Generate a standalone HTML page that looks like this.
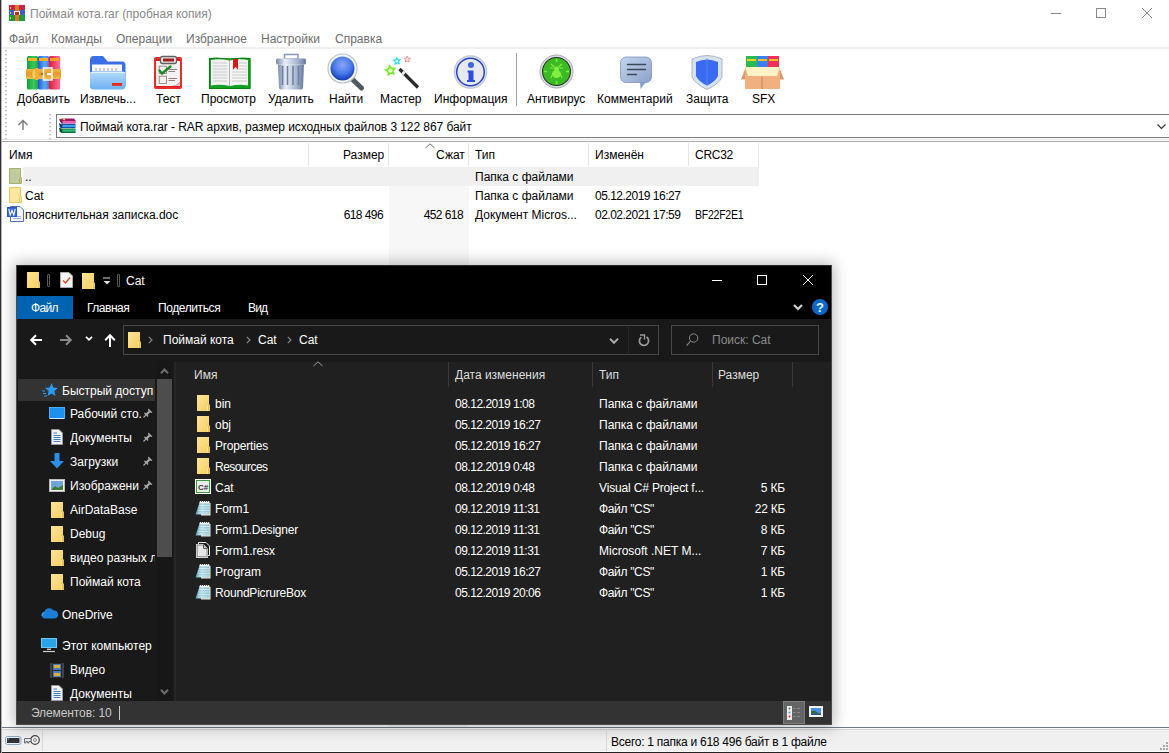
<!DOCTYPE html>
<html><head><meta charset="utf-8">
<style>
*{margin:0;padding:0;box-sizing:border-box}
html,body{width:1169px;height:753px;overflow:hidden;background:#fff;font-family:"Liberation Sans",sans-serif;font-size:12px;color:#000}
.a{position:absolute;white-space:nowrap}
.t{position:absolute;white-space:nowrap;line-height:14px}
svg{position:absolute;overflow:visible}
</style></head><body>
<!-- ============ WinRAR window ============ -->

<!-- title bar -->
<svg style="left:9px;top:5px" width="16" height="16" viewBox="0 0 16 16">
  <rect x="0" y="0" width="16" height="5" fill="#c8264a"/>
  <rect x="0" y="5" width="16" height="5" fill="#3e5fc4"/>
  <rect x="0" y="10" width="16" height="6" fill="#1f9a3a"/>
  <rect x="6" y="0" width="4" height="16" fill="#e07a22"/>
  <rect x="5" y="6" width="6" height="4" fill="#fff"/>
  <rect x="6" y="7" width="4" height="3" fill="#c03020"/>
  <rect x="1" y="2" width="1" height="2" fill="#f3d020"/><rect x="1" y="7" width="1" height="2" fill="#f3d020"/><rect x="1" y="12" width="1" height="2" fill="#f3d020"/>
</svg>
<div class="t" style="left:30px;top:7px;color:#888">Поймай кота.rar (пробная копия)</div>
<!-- caption buttons -->
<div class="a" style="left:1051px;top:13px;width:10px;height:1px;background:#888"></div>
<div class="a" style="left:1096px;top:8px;width:10px;height:10px;border:1px solid #888"></div>
<svg style="left:1142px;top:8px" width="10" height="10"><path d="M0 0L10 10M10 0L0 10" stroke="#888" stroke-width="1"/></svg>

<!-- menu -->
<div class="t" style="left:9px;top:32px;color:#6d6d6d">Файл</div>
<div class="t" style="left:51px;top:32px;color:#6d6d6d">Команды</div>
<div class="t" style="left:116px;top:32px;color:#6d6d6d">Операции</div>
<div class="t" style="left:186px;top:32px;color:#6d6d6d">Избранное</div>
<div class="t" style="left:261px;top:32px;color:#6d6d6d">Настройки</div>
<div class="t" style="left:335px;top:32px;color:#6d6d6d">Справка</div>
<div class="a" style="left:1px;top:47px;width:1168px;height:2px;background:#f0f0f0"></div>

<!-- toolbar -->
<div class="a" style="left:5px;top:50px;width:2px;height:90px;background:repeating-linear-gradient(#c4c4c4 0 1px,#e4e4e4 1px 2px,transparent 2px 4px)"></div>
<svg style="left:24px;top:52px" width="40" height="40" viewBox="0 0 40 40">
<defs>
<linearGradient id="gG" x1="0" x2="1"><stop offset="0" stop-color="#12a03a"/><stop offset="0.6" stop-color="#3cc860"/><stop offset="1" stop-color="#1fa840"/></linearGradient>
<linearGradient id="gB" x1="0" x2="1"><stop offset="0" stop-color="#2a50e0"/><stop offset="0.6" stop-color="#58aef5"/><stop offset="1" stop-color="#3a78e8"/></linearGradient>
<linearGradient id="gR" x1="0" x2="1"><stop offset="0" stop-color="#e81830"/><stop offset="0.6" stop-color="#f05070"/><stop offset="1" stop-color="#f070a8"/></linearGradient>
<linearGradient id="gO" x1="0" y1="0" x2="0" y2="1"><stop offset="0" stop-color="#f0b848"/><stop offset="0.5" stop-color="#e89828"/><stop offset="1" stop-color="#f0c050"/></linearGradient>
</defs>
<rect x="3" y="4" width="11.2" height="33.5" rx="1.5" fill="url(#gG)"/>
<rect x="14" y="4" width="11.2" height="33.5" rx="1.5" fill="url(#gB)"/>
<rect x="25" y="4" width="11.2" height="33.5" rx="1.5" fill="url(#gR)"/>
<rect x="4" y="6" width="9" height="3" fill="#f5b820"/><rect x="15" y="6" width="9" height="3" fill="#f0b020"/><rect x="26" y="6" width="9" height="3" fill="#f5a020"/>
<rect x="2" y="17" width="35" height="10" fill="url(#gO)"/>
<path d="M11 17.5A5 5 0 0 0 11 26.5Z" fill="#f5d060"/>
<rect x="11" y="16" width="3.5" height="12" fill="#f0b040"/>
<rect x="19.5" y="16" width="8.5" height="12" fill="none" stroke="#f4f4f4" stroke-width="1.6"/>
<rect x="23" y="21" width="4" height="2.2" fill="#fff"/>
<circle cx="18" cy="22" r="0.8" fill="#503010"/>
</svg>
<svg style="left:88px;top:52px" width="40" height="40" viewBox="0 0 40 40">
<defs><linearGradient id="gF" x1="0" y1="0" x2="0" y2="1"><stop offset="0" stop-color="#b4dcfc"/><stop offset="1" stop-color="#6cb0f2"/></linearGradient></defs>
<path d="M2 8Q2 4 6 4H15L19.5 9.5H34Q37.5 9.5 37.5 13V33Q37.5 37 34 37H6Q2 37 2 33Z" fill="#3a6ee8"/>
<rect x="4" y="12.5" width="30" height="7" fill="#fafafa"/>
<path d="M8 16V19M12 16V19M16 16V19M20 16V19M24 16V19M28 16V19" stroke="#b0b0b0" stroke-width="1.2"/>
<path d="M2 22Q2 19.5 5 19.5H34.5Q37.5 19.5 37.5 22V33Q37.5 37.5 33.5 37.5H6Q2 37.5 2 33Z" fill="url(#gF)"/>
<path d="M2.5 20.5H37" stroke="#e0f2ff" stroke-width="1"/>
<rect x="24" y="31" width="10" height="2.8" fill="#e82818"/>
</svg>
<svg style="left:148px;top:52px" width="40" height="40" viewBox="0 0 40 40">
<rect x="6" y="5" width="28" height="32" rx="2" fill="#e01c1c"/>
<rect x="7" y="6" width="26" height="30" rx="1.5" fill="none" stroke="#f04848" stroke-width="0.8"/>
<path d="M8 9H32V30Q28 34 24 34H8Z" fill="#f2f2f2"/>
<path d="M24 34Q30 33 32 30V34H24Z" fill="#c8c8c8"/>
<rect x="12.5" y="4.5" width="16" height="7" rx="2" fill="#e8e8e8" stroke="#606060" stroke-width="1.3"/>
<rect x="15" y="6.5" width="11" height="3" fill="#a02020"/>
<rect x="11.2" y="14.2" width="7.3" height="7.3" fill="none" stroke="#a08080" stroke-width="0.9"/>
<rect x="11.2" y="24.2" width="7.3" height="7.3" fill="none" stroke="#a08080" stroke-width="0.9"/>
<path d="M11.5 18.5L14 21.5L22.5 14.5" stroke="#1a8a2a" stroke-width="2.4" fill="none" stroke-linecap="round"/>
<path d="M20.5 17.5H29M20.5 19.5H27M20.5 26.5H29M20.5 28.5H27" stroke="#907070" stroke-width="0.9"/>
</svg>
<svg style="left:208px;top:52px" width="44" height="40" viewBox="0 0 44 40">
<path d="M1 6Q11 4.5 21.5 7Q32 4.5 42.5 6V37H1Z" fill="#14a020"/>
<path d="M1.5 6.5H42V36.5H1.5Z" fill="none" stroke="#0a7a14" stroke-width="0.8"/>
<path d="M3 8Q12 6.5 21.5 8.5V34Q12 32 3 33.5Z" fill="#f2f2f2"/>
<path d="M22 8.5Q31 6.5 40 8V33.5Q31 32 22 34Z" fill="#f6f6f6"/>
<path d="M21.5 8.5V34" stroke="#b0b0b0" stroke-width="1"/>
<path d="M5 11H19M5 14H19M5 17H19M5 20H19M5 23H19M5 26H19M5 29H19M24 14H39M24 17H39M24 20H39M24 23H39M24 26H39M24 29H39M31 11H39" stroke="#c4c4c4" stroke-width="0.9"/>
<path d="M25 7H30V17.5L27.5 15L25 17.5Z" fill="#d81818"/>
</svg>
<svg style="left:272px;top:52px" width="40" height="40" viewBox="0 0 40 40">
<defs><linearGradient id="gT" x1="0" x2="1"><stop offset="0" stop-color="#7888a8"/><stop offset="0.3" stop-color="#e8eef8"/><stop offset="0.7" stop-color="#a8b8d0"/><stop offset="1" stop-color="#6878a0"/></linearGradient></defs>
<rect x="12.5" y="2.5" width="13.5" height="4.5" fill="none" stroke="#8898b8" stroke-width="1.5"/>
<path d="M6 12.5H32L31 36Q30.5 37.5 29 37.5H9Q7.5 37.5 7 36Z" fill="url(#gT)"/>
<path d="M10.5 14V33M15.5 14V33M21 14V33M26.5 14V33" stroke="#7080a0" stroke-width="1.6"/>
<rect x="4" y="6.5" width="30" height="6" rx="1.5" fill="url(#gT)"/>
</svg>
<svg style="left:325px;top:52px" width="40" height="40" viewBox="0 0 40 40">
<defs><radialGradient id="gM" cx="0.5" cy="0.35" r="0.6"><stop offset="0" stop-color="#8aa4f8"/><stop offset="0.6" stop-color="#4a7ce8"/><stop offset="1" stop-color="#1a44c0"/></radialGradient></defs>
<path d="M27 27L36.5 36" stroke="#505860" stroke-width="5" stroke-linecap="round"/>
<circle cx="17.5" cy="16.5" r="14.5" fill="#f4f8fa" stroke="#b8c4cc" stroke-width="1.2"/>
<circle cx="17.5" cy="16.5" r="12" fill="url(#gM)"/>
</svg>
<svg style="left:382px;top:52px" width="40" height="40" viewBox="0 0 40 40">
<polygon points="7.29,12.30 9.85,15.63 14.05,15.60 11.67,19.06 13.00,23.05 8.97,21.85 5.59,24.35 5.49,20.15 2.06,17.71 6.03,16.31" fill="#78e820"/><circle cx="8.4" cy="18.6" r="2.2" fill="#e8ffd8"/>
<polygon points="14.50,4.42 16.14,6.94 19.13,7.20 17.24,9.54 17.92,12.47 15.11,11.39 12.53,12.94 12.69,9.94 10.42,7.97 13.33,7.19" fill="#28dcf8"/><circle cx="14.9" cy="9" r="1.5" fill="#e8fcff"/>
<polygon points="25.20,4.20 26.20,6.02 28.24,6.41 26.82,7.93 27.08,9.99 25.20,9.10 23.32,9.99 23.58,7.93 22.16,6.41 24.20,6.02" fill="#fde8e8" stroke="#f07878" stroke-width="0.8"/>
<path d="M17.5 17L36 35.5" stroke="#2a2a2a" stroke-width="3.2"/>
<path d="M20.5 20L22.5 22" stroke="#f0f0f0" stroke-width="3.2"/>
</svg>
<svg style="left:450px;top:52px" width="40" height="40" viewBox="0 0 40 40">
<circle cx="20.5" cy="20" r="17" fill="#dde2ea"/>
<circle cx="20.5" cy="20" r="16" fill="none" stroke="#c4cad4" stroke-width="1.2"/>
<circle cx="20.5" cy="20" r="13.8" fill="#e6eaf0" stroke="#2a44c8" stroke-width="1.5"/>
<circle cx="21" cy="13" r="3" fill="#3a66e0"/>
<path d="M17.5 18.5H23.5V28H25V30H17V28H18.5V20.5H17.5Z" fill="#2a4ee0"/>
</svg>
<svg style="left:536px;top:52px" width="40" height="40" viewBox="0 0 40 40">
<circle cx="20.5" cy="19.5" r="16.5" fill="#d8dce2" stroke="#a8acb4" stroke-width="1"/>
<circle cx="20.5" cy="19.5" r="14.5" fill="#283028"/>
<circle cx="20.5" cy="19.5" r="13.5" fill="#3cba24"/>
<path d="M20.5 7V10M20.5 29V32M8 19.5H11M30 19.5H33" stroke="#70f040" stroke-width="1.5"/>
<ellipse cx="20.5" cy="22" rx="4.5" ry="4" fill="#80f040"/>
<circle cx="20.5" cy="17" r="2.5" fill="#80f040"/>
<path d="M15 12L18.5 15M26 12L22.5 15M14 16H17.5M27 16H23.5M15 26L17 21M26 26L24 21" stroke="#80f040" stroke-width="1.1"/>
</svg>
<svg style="left:615px;top:52px" width="40" height="40" viewBox="0 0 40 40">
<defs><linearGradient id="gC" x1="0" y1="0" x2="1" y2="1"><stop offset="0" stop-color="#c4d4ec"/><stop offset="0.5" stop-color="#a8bcdc"/><stop offset="1" stop-color="#8aa0c8"/></linearGradient></defs>
<path d="M25 30L25.5 37L31 30Z" fill="#8ca4c8"/>
<rect x="5.5" y="5" width="31" height="25.5" rx="5.5" fill="url(#gC)" stroke="#8094bc" stroke-width="0.8"/>
<path d="M12.5 12.5H30.5M12.5 17.5H30.5M12.5 22.5H21.5" stroke="#3e4858" stroke-width="1.4" stroke-linecap="round"/>
</svg>
<svg style="left:686px;top:52px" width="40" height="40" viewBox="0 0 40 40">
<path d="M6 7Q21 0 36 7V25Q33 32 21 37.5Q9 32 6 25Z" fill="#d8e2ee" stroke="#98a4b8" stroke-width="0.8"/>
<path d="M10 10Q21 5 32 10V24Q29 30 21 33.5Q13 30 10 24Z" fill="#3a6af2"/>
<path d="M21 6.5V33.5" stroke="#5a88f8" stroke-width="0.8"/>
</svg>
<svg style="left:740px;top:52px" width="45" height="40" viewBox="0 0 45 40">
<rect x="6" y="4" width="11" height="11" fill="#2ab850"/><rect x="17" y="4" width="11" height="11" fill="#3a80f0"/><rect x="28" y="4" width="11" height="11" fill="#f03058"/>
<rect x="7" y="7" width="9" height="2" fill="#f8d020"/><rect x="18" y="7" width="9" height="2" fill="#f0c020"/><rect x="29" y="7" width="9" height="2" fill="#f8c020"/>
<path d="M5 17L1 27.5H8ZM40 17L44 27.5H37Z" fill="#d89a70"/>
<rect x="5" y="15" width="35" height="22" fill="#f0b080"/>
<path d="M5 15H40L37 24H8Z" fill="#fff2c4"/>
<path d="M22 24.5V37" stroke="#c87850" stroke-width="0.9"/>
</svg>
<div class="t" style="left:17px;top:92px">Добавить</div>
<div class="t" style="left:80px;top:92px">Извлечь...</div>
<div class="t" style="left:156px;top:92px">Тест</div>
<div class="t" style="left:201px;top:92px">Просмотр</div>
<div class="t" style="left:268px;top:92px">Удалить</div>
<div class="t" style="left:329px;top:92px">Найти</div>
<div class="t" style="left:380px;top:92px">Мастер</div>
<div class="t" style="left:434px;top:92px">Информация</div>
<div class="a" style="left:516px;top:53px;width:1px;height:53px;background:#a0a0a0"></div>
<div class="t" style="left:527px;top:92px">Антивирус</div>
<div class="t" style="left:597px;top:92px">Комментарий</div>
<div class="t" style="left:686px;top:92px">Защита</div>
<div class="t" style="left:752px;top:92px">SFX</div>

<!-- address row -->
<svg style="left:17px;top:119px" width="12" height="12" viewBox="0 0 12 12"><path d="M6 11V1.5M1.5 6L6 1.5L10.5 6" stroke="#7a7a7a" stroke-width="1.4" fill="none"/></svg>
<div class="a" style="left:49px;top:114px;width:2px;height:26px;background:repeating-linear-gradient(#c4c4c4 0 1px,#e4e4e4 1px 2px,transparent 2px 4px)"></div>
<div class="a" style="left:56px;top:114px;width:1113px;height:24px;border:1px solid #7a7a7a;border-right:none;background:#fff"></div>
<svg style="left:59px;top:118px" width="17" height="16" viewBox="0 0 17 16"><path d="M0.5 1.5L3 0.5H15L16.5 2.5V5.5H3Z" fill="#a01868"/><path d="M3.5 3H16V5H3.5Z" fill="#f060b0"/><path d="M4 0.8L6 2" stroke="#e8e040" stroke-width="1.2"/><path d="M0.5 5.5L3 6H16.5V10H3L0.5 9.5Z" fill="#1850a8"/><path d="M3.5 7H16V9H3.5Z" fill="#40a0f0"/><path d="M0.5 10L3 10.5H16.5V15H3L0.5 14Z" fill="#107040"/><path d="M3.5 11.5H16V13.5H3.5Z" fill="#30c080"/><path d="M0.5 1.5L3 5.5M0.5 5.5L3 10M0.5 10L3 14.5" stroke="#222" stroke-width="1"/></svg>
<div class="t" style="left:80px;top:120px;letter-spacing:-0.071px">Поймай кота.rar - RAR архив, размер исходных файлов 3 122 867 байт</div>
<svg style="left:1157px;top:124px" width="9" height="6"><path d="M0.5 0.5L4.5 4.5L8.5 0.5" stroke="#333" stroke-width="1.2" fill="none"/></svg>
<div class="a" style="left:1px;top:139px;width:1168px;height:1px;background:#e6e6e6"></div><div class="a" style="left:1px;top:141px;width:1168px;height:1px;background:#a4a8ac"></div>

<!-- list header -->
<div class="t" style="left:9px;top:148px">Имя</div>
<div class="a" style="left:308px;top:143px;width:1px;height:23px;background:#e5e5e5"></div>
<div class="t" style="left:343px;top:148px">Размер</div>
<div class="a" style="left:388px;top:143px;width:1px;height:23px;background:#e5e5e5"></div>
<svg style="left:425px;top:143px" width="10" height="6"><path d="M0.5 5L5 0.8L9.5 5" stroke="#6a6a6a" stroke-width="1" fill="none"/></svg>
<div class="t" style="left:436px;top:148px">Сжат</div>
<div class="a" style="left:468px;top:143px;width:1px;height:23px;background:#e5e5e5"></div>
<div class="t" style="left:475px;top:148px">Тип</div>
<div class="a" style="left:588px;top:143px;width:1px;height:23px;background:#e5e5e5"></div>
<div class="t" style="left:595px;top:148px">Изменён</div>
<div class="a" style="left:688px;top:143px;width:1px;height:23px;background:#e5e5e5"></div>
<div class="t" style="left:695px;top:148px;letter-spacing:-0.268px">CRC32</div>
<div class="a" style="left:758px;top:143px;width:1px;height:23px;background:#e5e5e5"></div>

<!-- sorted column bg -->
<div class="a" style="left:389px;top:185px;width:80px;height:568px;background:#f7f7f7"></div>
<!-- rows -->
<div class="a" style="left:23px;top:167px;width:736px;height:19px;background:#f0f0f0"></div>
<svg style="left:9px;top:168px" width="13" height="16" viewBox="0 0 13 16"><path d="M0.5 0.5H11.5V9.5H12.5V15.5H0.5Z" fill="#c0cc9c" stroke="#a8b070"/><path d="M10.5 10V15.5" stroke="#a8b070"/></svg>
<div class="t" style="left:25px;top:170px">..</div>
<div class="t" style="left:475px;top:170px">Папка с файлами</div>

<svg style="left:9px;top:187px" width="13" height="16" viewBox="0 0 13 16"><path d="M0.5 0.5H11.5V9.5H12.5V15.5H0.5Z" fill="#fce6a0" stroke="#e8c860"/><path d="M10.5 10V15.5" stroke="#e8c860"/></svg>
<div class="t" style="left:25px;top:189px">Cat</div>
<div class="t" style="left:475px;top:189px">Папка с файлами</div>
<div class="t" style="left:595px;top:189px;letter-spacing:-0.503px">05.12.2019 16:27</div>

<svg style="left:7px;top:206px" width="17" height="17" viewBox="0 0 17 17"><path d="M3.5 0.5H13L16.5 4V15.5H3.5Z" fill="#f4f8fc" stroke="#5070b0"/><path d="M6 12.5H14M6 10.5H14" stroke="#9ab0d8"/><rect x="0" y="1" width="10" height="10" fill="#2858b8"/><rect x="1" y="2" width="8" height="8" fill="#3a6cd0"/><path d="M1.8 3L3.2 9L5 4.5L6.8 9L8.2 3" stroke="#fff" stroke-width="1.1" fill="none"/></svg>
<div class="t" style="left:25px;top:208px">пояснительная записка.doc</div>
<div class="t" style="left:309px;top:208px;width:74px;text-align:right;letter-spacing:-0.574px">618 496</div>
<div class="t" style="left:389px;top:208px;width:74px;text-align:right;letter-spacing:-0.574px">452 618</div>
<div class="t" style="left:475px;top:208px">Документ Micros...</div>
<div class="t" style="left:595px;top:208px;letter-spacing:-0.503px">02.02.2021 17:59</div>
<div class="t" style="left:695px;top:208px;letter-spacing:-0.3px;transform:scaleX(0.88);transform-origin:0 0">BF22F2E1</div>

<!-- status bar -->
<div class="a" style="left:1px;top:727px;width:1168px;height:1px;background:#707888"></div>
<div class="a" style="left:1px;top:728px;width:1168px;height:1px;background:#fafafa"></div>
<div class="a" style="left:1px;top:729px;width:1168px;height:1px;background:#d9d9d9"></div><div class="a" style="left:1px;top:730px;width:1168px;height:21px;background:#f0f0f0"></div><div class="a" style="left:1px;top:751px;width:1168px;height:1px;background:#fbfbfb"></div><div class="a" style="left:1166px;top:742px;width:2px;height:2px;background:#a8a8a8;box-shadow:-3px 3px #a8a8a8,0 3px #a8a8a8,-6px 6px #a8a8a8,-3px 6px #a8a8a8,0 6px #a8a8a8"></div><svg style="left:5px;top:736px" width="17" height="9" viewBox="0 0 17 9"><rect x="0.5" y="0.5" width="15.5" height="8" rx="2" fill="#e8f0f8" stroke="#8aa8c0"/><rect x="2" y="2" width="12.5" height="5" fill="#303438"/><circle cx="3.2" cy="3" r="0.6" fill="#eee"/></svg><svg style="left:24px;top:735px" width="17" height="11" viewBox="0 0 17 11"><circle cx="11" cy="5" r="4.3" fill="#f4f4f4" stroke="#404448" stroke-width="1.2"/><circle cx="11" cy="5" r="1.5" fill="none" stroke="#888" stroke-width="1"/><path d="M0.5 3.5H7V6.5H5V8H3.5V6.5H2V8H0.5Z" fill="#e8e8e8" stroke="#505458" stroke-width="0.8"/></svg>
<div class="a" style="left:42px;top:731px;width:1px;height:20px;background:#d9d9d9"></div>
<div class="a" style="left:606px;top:731px;width:1px;height:20px;background:#d9d9d9"></div>
<div class="t" style="left:611px;top:735px;letter-spacing:-0.255px">Всего: 1 папка и 618 496 байт в 1 файле</div>
<div class="a" style="left:0;top:752px;width:1169px;height:1px;background:#222"></div>
<div class="a" style="left:0;top:0;width:1px;height:753px;background:#2e2e34"></div><div class="a" style="left:1px;top:0;width:1px;height:753px;background:#b4b4bc"></div>
<div class="a" style="left:16px;top:265px;width:816px;height:460px;box-shadow:0 0 14px 2px rgba(0,0,0,0.28)"></div>
<div class="a" style="left:16px;top:265px;width:816px;height:460px;background:#000;overflow:hidden">
<svg style="left:11px;top:7px" width="13" height="16" viewBox="0 0 13 16"><defs><linearGradient id="fg" x1="0" y1="0" x2="1" y2="1"><stop offset="0" stop-color="#fde49a"/><stop offset="1" stop-color="#f6cf60"/></linearGradient></defs><rect x="0" y="0" width="12" height="16" fill="url(#fg)"/><path d="M10 9.5H13V16H10Z" fill="#eac058"/><path d="M10.5 10V16" stroke="#fbe3a0" stroke-width="1"/></svg>
<div class="a" style="left:31px;top:9px;width:3px;height:13px;border:1px solid #5a5a5a;border-radius:1px"></div>
<svg style="left:44px;top:7px" width="13" height="16" viewBox="0 0 13 16"><path d="M0.5 0.5H9L12.5 4V15.5H0.5Z" fill="#f4f4f4" stroke="#aaa"/><path d="M3 8.5L5.5 11L10 5.5" stroke="#e0502a" stroke-width="1.5" fill="none"/></svg>
<svg style="left:66px;top:8px" width="13" height="16" viewBox="0 0 13 16"><defs><linearGradient id="fg" x1="0" y1="0" x2="1" y2="1"><stop offset="0" stop-color="#fde49a"/><stop offset="1" stop-color="#f6cf60"/></linearGradient></defs><rect x="0" y="0" width="12" height="16" fill="url(#fg)"/><path d="M10 9.5H13V16H10Z" fill="#eac058"/><path d="M10.5 10V16" stroke="#fbe3a0" stroke-width="1"/></svg>
<svg style="left:87px;top:12px" width="8" height="8"><path d="M0 1H7" stroke="#ddd"/><path d="M0.5 4H7.5L4 7.5Z" fill="#ddd"/></svg>
<div class="a" style="left:101px;top:9px;width:3px;height:13px;border:1px solid #5a5a5a;border-radius:1px"></div>
<div class="t" style="left:110px;top:9px;color:#fff">Cat</div>
<div class="a" style="left:696px;top:15px;width:10px;height:1px;background:#fff"></div>
<div class="a" style="left:741px;top:10px;width:10px;height:10px;border:1px solid #fff"></div>
<svg style="left:787px;top:10px" width="10" height="10"><path d="M0 0L10 10M10 0L0 10" stroke="#fff" stroke-width="1"/></svg>
<div class="a" style="left:0;top:31px;width:57px;height:23px;background:#0063b1"></div>
<div class="t" style="left:15px;top:36px;color:#fff;letter-spacing:-0.65px">Файл</div>
<div class="t" style="left:71px;top:36px;color:#fff;letter-spacing:-0.5px">Главная</div>
<div class="t" style="left:142px;top:36px;color:#fff;letter-spacing:-0.4px">Поделиться</div>
<div class="t" style="left:232px;top:36px;color:#fff;letter-spacing:-0.8px">Вид</div>
<svg style="left:777px;top:39px" width="10" height="7"><path d="M1 1L5 5L9 1" stroke="#d0d0d0" stroke-width="2.2" fill="none"/></svg>
<div class="a" style="left:796px;top:34px;width:16px;height:16px;border-radius:50%;background:#0b68c4"></div>
<div class="t" style="left:800px;top:36px;color:#f0f4ff;font-weight:bold;font-size:13px">?</div>
<div class="a" style="left:0;top:54px;width:816px;height:42px;background:#191919"></div>
<svg style="left:14px;top:69px" width="12" height="12" viewBox="0 0 12 12"><path d="M12 6H1.5M6 1.2L1.2 6L6 10.8" stroke="#fff" stroke-width="2" fill="none"/></svg>
<svg style="left:44px;top:69px" width="12" height="12" viewBox="0 0 12 12"><path d="M0 6H10.5M6 1.2L10.8 6L6 10.8" stroke="#8a8a8a" stroke-width="2" fill="none"/></svg>
<svg style="left:69px;top:71px" width="8" height="5" viewBox="0 0 8 5"><path d="M1 0.8L4 3.8L7 0.8" stroke="#fff" stroke-width="1.8" fill="none"/></svg>
<svg style="left:88px;top:69px" width="12" height="13" viewBox="0 0 12 13"><path d="M6 13V1.5M1.2 6.2L6 1.2L10.8 6.2" stroke="#fff" stroke-width="2" fill="none"/></svg>
<div class="a" style="left:107px;top:60px;width:536px;height:30px;border:1px solid #474747"></div>
<div class="a" style="left:612px;top:61px;width:1px;height:28px;background:#262626"></div>
<svg style="left:112px;top:67px" width="13" height="16" viewBox="0 0 13 16"><defs><linearGradient id="fg" x1="0" y1="0" x2="1" y2="1"><stop offset="0" stop-color="#fde49a"/><stop offset="1" stop-color="#f6cf60"/></linearGradient></defs><rect x="0" y="0" width="12" height="16" fill="url(#fg)"/><path d="M10 9.5H13V16H10Z" fill="#eac058"/><path d="M10.5 10V16" stroke="#fbe3a0" stroke-width="1"/></svg>
<svg style="left:132px;top:71px" width="5" height="8"><path d="M0.8 0.8L4 4L0.8 7.2" stroke="#888" stroke-width="1.2" fill="none"/></svg>
<div class="t" style="left:147px;top:68px;color:#fff">Поймай кота</div>
<svg style="left:230px;top:71px" width="5" height="8"><path d="M0.8 0.8L4 4L0.8 7.2" stroke="#888" stroke-width="1.2" fill="none"/></svg>
<div class="t" style="left:242px;top:68px;color:#fff">Cat</div>
<svg style="left:271px;top:71px" width="5" height="8"><path d="M0.8 0.8L4 4L0.8 7.2" stroke="#888" stroke-width="1.2" fill="none"/></svg>
<div class="t" style="left:283px;top:68px;color:#fff">Cat</div>
<svg style="left:593px;top:73px" width="10" height="6"><path d="M1 0.8L5 4.8L9 0.8" stroke="#a8a8a8" stroke-width="2" fill="none"/></svg>
<svg style="left:622px;top:69px" width="12" height="13" viewBox="0 0 12 13"><path d="M3.2 3.2A4.6 4.6 0 1 0 8.5 3" stroke="#9a9a9a" stroke-width="1.7" fill="none"/><path d="M2 1H6.5V5.5" stroke="#9a9a9a" stroke-width="1.4" fill="none"/></svg>
<div class="a" style="left:655px;top:60px;width:148px;height:30px;border:1px solid #474747"></div>
<svg style="left:670px;top:68px" width="13" height="14" viewBox="0 0 13 14"><circle cx="7.6" cy="5" r="4.2" stroke="#8a8a8a" stroke-width="1" fill="none"/><path d="M4.6 8L0.6 12.6" stroke="#8a8a8a" stroke-width="1.1"/></svg>
<div class="t" style="left:696px;top:68px;color:#8c8c8c">Поиск: Cat</div>
<div class="a" style="left:0;top:96px;width:159px;height:340px;background:#191919"></div>
<div class="a" style="left:141px;top:96px;width:15px;height:340px;background:#171717"></div>
<svg style="left:144px;top:103px" width="9" height="6"><path d="M1 5.2L4.5 1.5L8 5.2" stroke="#6e6e6e" stroke-width="2" fill="none"/></svg>
<div class="a" style="left:141px;top:114px;width:15px;height:178px;background:#4d4d4d"></div>
<svg style="left:144px;top:424px" width="9" height="6"><path d="M1 0.8L4.5 4.5L8 0.8" stroke="#6e6e6e" stroke-width="2" fill="none"/></svg>
<div class="a" style="left:2px;top:114px;width:137px;height:22px;background:#333"></div>
<svg style="left:26px;top:117px" width="16" height="16" viewBox="0 0 16 16"><path d="M9.5 1L11.3 5.6L16 6L12.4 9.1L13.5 14L9.5 11.4L5.5 14L6.6 9.1L3 6L7.7 5.6Z" fill="#2b9af3"/><path d="M0 9H3M1 11.5H4M2 14H5" stroke="#2b9af3" stroke-width="1"/></svg>
<div class="t" style="left:46px;top:119px;color:#fff;width:93px;overflow:hidden">Быстрый доступ</div>
<svg style="left:33px;top:142px" width="16" height="13" viewBox="0 0 16 13"><rect x="0" y="0" width="16" height="12" fill="#1e90ef"/><rect x="0.5" y="0.5" width="15" height="11" fill="none" stroke="#43b0ff"/><path d="M1 11.5H15" stroke="#cfe8ff" stroke-width="1"/></svg>
<div class="t" style="left:54px;top:142px;color:#fff;width:85px;overflow:hidden">Рабочий сто.</div>
<svg style="left:127px;top:143px" width="10" height="10" viewBox="0 0 10 10"><path d="M5.5 0.5L9.5 4.5L8.5 5L7 4.5L5 6.5L5.3 8.3L4.6 9L1 5.4L1.7 4.7L3.5 5L5.5 3L5 1.5Z" fill="#a8a8a8"/><path d="M2.8 7.2L0.5 9.5" stroke="#a8a8a8" stroke-width="1.2"/></svg>
<svg style="left:35px;top:164px" width="12" height="16" viewBox="0 0 12 16"><path d="M0.5 0.5H8L11.5 4V15.5H0.5Z" fill="#f2f2f2" stroke="#9a9a9a"/><path d="M2.5 4H6M2.5 6.5H9.5M2.5 8.5H9.5M2.5 10.5H9.5M2.5 12.5H9.5" stroke="#3c7fd0" stroke-width="1"/></svg>
<div class="t" style="left:54px;top:166px;color:#fff;width:85px;overflow:hidden">Документы</div>
<svg style="left:127px;top:167px" width="10" height="10" viewBox="0 0 10 10"><path d="M5.5 0.5L9.5 4.5L8.5 5L7 4.5L5 6.5L5.3 8.3L4.6 9L1 5.4L1.7 4.7L3.5 5L5.5 3L5 1.5Z" fill="#a8a8a8"/><path d="M2.8 7.2L0.5 9.5" stroke="#a8a8a8" stroke-width="1.2"/></svg>
<svg style="left:33px;top:188px" width="16" height="16" viewBox="0 0 16 16"><path d="M5.5 0H10.5V8H15L8 15.5L1 8H5.5Z" fill="#2d8ee8"/></svg>
<div class="t" style="left:54px;top:190px;color:#fff;width:85px;overflow:hidden">Загрузки</div>
<svg style="left:127px;top:191px" width="10" height="10" viewBox="0 0 10 10"><path d="M5.5 0.5L9.5 4.5L8.5 5L7 4.5L5 6.5L5.3 8.3L4.6 9L1 5.4L1.7 4.7L3.5 5L5.5 3L5 1.5Z" fill="#a8a8a8"/><path d="M2.8 7.2L0.5 9.5" stroke="#a8a8a8" stroke-width="1.2"/></svg>
<svg style="left:33px;top:214px" width="16" height="13" viewBox="0 0 16 13"><rect x="0.5" y="0.5" width="15" height="12" fill="#f0f0f0" stroke="#bbb"/><rect x="2" y="2" width="12" height="9" fill="#6fa8d8"/><path d="M2 11L6 7L9 9L14 6V11Z" fill="#3d7a3a"/></svg>
<div class="t" style="left:54px;top:214px;color:#fff;width:85px;overflow:hidden">Изображени</div>
<svg style="left:127px;top:215px" width="10" height="10" viewBox="0 0 10 10"><path d="M5.5 0.5L9.5 4.5L8.5 5L7 4.5L5 6.5L5.3 8.3L4.6 9L1 5.4L1.7 4.7L3.5 5L5.5 3L5 1.5Z" fill="#a8a8a8"/><path d="M2.8 7.2L0.5 9.5" stroke="#a8a8a8" stroke-width="1.2"/></svg>
<svg style="left:35px;top:237px" width="13" height="16" viewBox="0 0 13 16"><defs><linearGradient id="fg" x1="0" y1="0" x2="1" y2="1"><stop offset="0" stop-color="#fde49a"/><stop offset="1" stop-color="#f6cf60"/></linearGradient></defs><rect x="0" y="0" width="12" height="16" fill="url(#fg)"/><path d="M10 9.5H13V16H10Z" fill="#eac058"/><path d="M10.5 10V16" stroke="#fbe3a0" stroke-width="1"/></svg>
<div class="t" style="left:54px;top:238px;color:#fff;width:85px;overflow:hidden">AirDataBase</div>
<svg style="left:35px;top:261px" width="13" height="16" viewBox="0 0 13 16"><defs><linearGradient id="fg" x1="0" y1="0" x2="1" y2="1"><stop offset="0" stop-color="#fde49a"/><stop offset="1" stop-color="#f6cf60"/></linearGradient></defs><rect x="0" y="0" width="12" height="16" fill="url(#fg)"/><path d="M10 9.5H13V16H10Z" fill="#eac058"/><path d="M10.5 10V16" stroke="#fbe3a0" stroke-width="1"/></svg>
<div class="t" style="left:54px;top:262px;color:#fff;width:85px;overflow:hidden">Debug</div>
<svg style="left:35px;top:285px" width="13" height="16" viewBox="0 0 13 16"><defs><linearGradient id="fg" x1="0" y1="0" x2="1" y2="1"><stop offset="0" stop-color="#fde49a"/><stop offset="1" stop-color="#f6cf60"/></linearGradient></defs><rect x="0" y="0" width="12" height="16" fill="url(#fg)"/><path d="M10 9.5H13V16H10Z" fill="#eac058"/><path d="M10.5 10V16" stroke="#fbe3a0" stroke-width="1"/></svg>
<div class="t" style="left:54px;top:286px;color:#fff;width:85px;overflow:hidden">видео разных л</div>
<svg style="left:35px;top:309px" width="13" height="16" viewBox="0 0 13 16"><defs><linearGradient id="fg" x1="0" y1="0" x2="1" y2="1"><stop offset="0" stop-color="#fde49a"/><stop offset="1" stop-color="#f6cf60"/></linearGradient></defs><rect x="0" y="0" width="12" height="16" fill="url(#fg)"/><path d="M10 9.5H13V16H10Z" fill="#eac058"/><path d="M10.5 10V16" stroke="#fbe3a0" stroke-width="1"/></svg>
<div class="t" style="left:54px;top:310px;color:#fff;width:85px;overflow:hidden">Поймай кота</div>
<svg style="left:25px;top:342px" width="17" height="12" viewBox="0 0 17 12"><path d="M4 11.5A3.5 3.5 0 0 1 3.5 4.6A5 5 0 0 1 12.5 3.5A4 4 0 0 1 13.5 11.5Z" fill="#1b7fd8"/><path d="M1 9A3 3 0 0 1 3.5 5.5" stroke="#49a6f5" stroke-width="1" fill="none"/></svg>
<div class="t" style="left:46px;top:343px;color:#fff">OneDrive</div>
<svg style="left:25px;top:372px" width="16" height="16" viewBox="0 0 16 16"><rect x="0" y="1" width="16" height="10" fill="#29a4e8"/><rect x="0.5" y="1.5" width="15" height="9" fill="none" stroke="#6cc8f7"/><path d="M6 11.5H10V13H6Z" fill="#bbb"/><path d="M2 14.5H14" stroke="#ccc" stroke-width="1.2"/></svg>
<div class="t" style="left:46px;top:374px;color:#fff">Этот компьютер</div>
<svg style="left:34px;top:398px" width="14" height="15" viewBox="0 0 14 15"><rect x="0" y="0" width="14" height="15" fill="#2a2a2a"/><rect x="3" y="1" width="8" height="6" fill="#4a78c8"/><rect x="3" y="8" width="8" height="6" fill="#4a78c8"/><rect x="4" y="2" width="6" height="3" fill="#d8b030"/><rect x="4" y="10" width="6" height="3" fill="#d8b030"/><path d="M1 0.5V15M13 0.5V15" stroke="#8a8a8a" stroke-dasharray="1 1"/></svg>
<div class="t" style="left:54px;top:398px;color:#fff">Видео</div>
<svg style="left:35px;top:420px" width="12" height="16" viewBox="0 0 12 16"><path d="M0.5 0.5H8L11.5 4V15.5H0.5Z" fill="#f2f2f2" stroke="#9a9a9a"/><path d="M2.5 4H6M2.5 6.5H9.5M2.5 8.5H9.5M2.5 10.5H9.5M2.5 12.5H9.5" stroke="#3c7fd0" stroke-width="1"/></svg>
<div class="t" style="left:54px;top:422px;color:#fff">Документы</div>
<div class="a" style="left:159px;top:96px;width:657px;height:340px;background:#202020"></div>
<div class="a" style="left:159px;top:96px;width:657px;height:1px;background:#191919"></div>
<div class="a" style="left:158px;top:97px;width:2px;height:339px;background:#262626"></div>
<div class="t" style="left:178px;top:103px;color:#dedede">Имя</div>
<svg style="left:297px;top:96px" width="10" height="6"><path d="M0.5 5L5 0.8L9.5 5" stroke="#a0a0a0" stroke-width="1" fill="none"/></svg>
<div class="a" style="left:432px;top:97px;width:1px;height:25px;background:#3a3a3a"></div>
<div class="a" style="left:576px;top:97px;width:1px;height:25px;background:#3a3a3a"></div>
<div class="a" style="left:696px;top:97px;width:1px;height:25px;background:#3a3a3a"></div>
<div class="a" style="left:776px;top:97px;width:1px;height:25px;background:#3a3a3a"></div>
<div class="t" style="left:439px;top:103px;color:#dedede">Дата изменения</div>
<div class="t" style="left:583px;top:103px;color:#dedede">Тип</div>
<div class="t" style="left:702px;top:103px;color:#dedede">Размер</div>
<svg style="left:181px;top:130px" width="13" height="16" viewBox="0 0 13 16"><defs><linearGradient id="fg" x1="0" y1="0" x2="1" y2="1"><stop offset="0" stop-color="#fde49a"/><stop offset="1" stop-color="#f6cf60"/></linearGradient></defs><rect x="0" y="0" width="12" height="16" fill="url(#fg)"/><path d="M10 9.5H13V16H10Z" fill="#eac058"/><path d="M10.5 10V16" stroke="#fbe3a0" stroke-width="1"/></svg>
<div class="t" style="left:199px;top:132px;color:#fff">bin</div>
<div class="t" style="left:439px;top:132px;color:#fff;letter-spacing:-0.491px">08.12.2019 1:08</div>
<div class="t" style="left:583px;top:132px;color:#fff">Папка с файлами</div>
<svg style="left:181px;top:151px" width="13" height="16" viewBox="0 0 13 16"><defs><linearGradient id="fg" x1="0" y1="0" x2="1" y2="1"><stop offset="0" stop-color="#fde49a"/><stop offset="1" stop-color="#f6cf60"/></linearGradient></defs><rect x="0" y="0" width="12" height="16" fill="url(#fg)"/><path d="M10 9.5H13V16H10Z" fill="#eac058"/><path d="M10.5 10V16" stroke="#fbe3a0" stroke-width="1"/></svg>
<div class="t" style="left:199px;top:153px;color:#fff">obj</div>
<div class="t" style="left:439px;top:153px;color:#fff;letter-spacing:-0.503px">05.12.2019 16:27</div>
<div class="t" style="left:583px;top:153px;color:#fff">Папка с файлами</div>
<svg style="left:181px;top:172px" width="13" height="16" viewBox="0 0 13 16"><defs><linearGradient id="fg" x1="0" y1="0" x2="1" y2="1"><stop offset="0" stop-color="#fde49a"/><stop offset="1" stop-color="#f6cf60"/></linearGradient></defs><rect x="0" y="0" width="12" height="16" fill="url(#fg)"/><path d="M10 9.5H13V16H10Z" fill="#eac058"/><path d="M10.5 10V16" stroke="#fbe3a0" stroke-width="1"/></svg>
<div class="t" style="left:199px;top:174px;color:#fff;letter-spacing:-0.169px">Properties</div>
<div class="t" style="left:439px;top:174px;color:#fff;letter-spacing:-0.503px">05.12.2019 16:27</div>
<div class="t" style="left:583px;top:174px;color:#fff">Папка с файлами</div>
<svg style="left:181px;top:193px" width="13" height="16" viewBox="0 0 13 16"><defs><linearGradient id="fg" x1="0" y1="0" x2="1" y2="1"><stop offset="0" stop-color="#fde49a"/><stop offset="1" stop-color="#f6cf60"/></linearGradient></defs><rect x="0" y="0" width="12" height="16" fill="url(#fg)"/><path d="M10 9.5H13V16H10Z" fill="#eac058"/><path d="M10.5 10V16" stroke="#fbe3a0" stroke-width="1"/></svg>
<div class="t" style="left:199px;top:195px;color:#fff;letter-spacing:-0.540px">Resources</div>
<div class="t" style="left:439px;top:195px;color:#fff;letter-spacing:-0.491px">08.12.2019 0:48</div>
<div class="t" style="left:583px;top:195px;color:#fff">Папка с файлами</div>
<svg style="left:179px;top:214px" width="16" height="15" viewBox="0 0 16 15"><rect x="0" y="0" width="16" height="15" fill="#f8f8f8"/><rect x="1.5" y="1.5" width="13" height="12" fill="#ececec" stroke="#3a9a3a" stroke-width="1"/><text x="3" y="10.5" font-size="8" fill="#333" font-family="Liberation Sans" font-weight="bold">C#</text></svg>
<div class="t" style="left:199px;top:216px;color:#fff">Cat</div>
<div class="t" style="left:439px;top:216px;color:#fff;letter-spacing:-0.491px">08.12.2019 0:48</div>
<div class="t" style="left:583px;top:216px;color:#fff;letter-spacing:-0.157px">Visual C# Project f...</div>
<div class="t" style="left:700px;top:216px;width:69px;text-align:right;color:#fff;letter-spacing:-0.168px">5 КБ</div>
<svg style="left:179px;top:235px" width="16" height="16" viewBox="0 0 16 16"><defs><linearGradient id="ng" x1="0" x2="1"><stop offset="0" stop-color="#5a9cb0"/><stop offset="0.45" stop-color="#b0d8e4"/><stop offset="1" stop-color="#8cc0d0"/></linearGradient></defs><path d="M6 3H15.5V15.5H6Z" fill="#f4eedc"/><path d="M4.5 2.5H14.5V14.5H0.5Z" fill="url(#ng)"/><path d="M4.2 5.5H14M3.7 8H14M3.2 10.5H14M2.7 13H14" stroke="#e4f4f8" stroke-width="0.7"/><path d="M4.5 2.5H14.5" stroke="#f8f8f8" stroke-width="1.6"/><path d="M5.5 1V2.2M7.5 1V2.2M9.5 1V2.2M11.5 1V2.2M13.5 1V2.2" stroke="#e8e8e8" stroke-width="1"/></svg>
<div class="t" style="left:199px;top:237px;color:#fff;letter-spacing:-0.134px">Form1</div>
<div class="t" style="left:439px;top:237px;color:#fff;letter-spacing:-0.503px">09.12.2019 11:31</div>
<div class="t" style="left:583px;top:237px;color:#fff;letter-spacing:-0.337px">Файл "CS"</div>
<div class="t" style="left:700px;top:237px;width:69px;text-align:right;color:#fff;letter-spacing:-0.268px">22 КБ</div>
<svg style="left:179px;top:256px" width="16" height="16" viewBox="0 0 16 16"><defs><linearGradient id="ng" x1="0" x2="1"><stop offset="0" stop-color="#5a9cb0"/><stop offset="0.45" stop-color="#b0d8e4"/><stop offset="1" stop-color="#8cc0d0"/></linearGradient></defs><path d="M6 3H15.5V15.5H6Z" fill="#f4eedc"/><path d="M4.5 2.5H14.5V14.5H0.5Z" fill="url(#ng)"/><path d="M4.2 5.5H14M3.7 8H14M3.2 10.5H14M2.7 13H14" stroke="#e4f4f8" stroke-width="0.7"/><path d="M4.5 2.5H14.5" stroke="#f8f8f8" stroke-width="1.6"/><path d="M5.5 1V2.2M7.5 1V2.2M9.5 1V2.2M11.5 1V2.2M13.5 1V2.2" stroke="#e8e8e8" stroke-width="1"/></svg>
<div class="t" style="left:199px;top:258px;color:#fff;letter-spacing:-0.217px">Form1.Designer</div>
<div class="t" style="left:439px;top:258px;color:#fff;letter-spacing:-0.503px">09.12.2019 11:31</div>
<div class="t" style="left:583px;top:258px;color:#fff;letter-spacing:-0.337px">Файл "CS"</div>
<div class="t" style="left:700px;top:258px;width:69px;text-align:right;color:#fff;letter-spacing:-0.168px">8 КБ</div>
<svg style="left:179px;top:277px" width="16" height="16" viewBox="0 0 16 16"><path d="M3.5 0.5H11L14.5 4V13.5H3.5Z" fill="#1e1e1e" stroke="#e8e8e8"/><path d="M1.5 2.5H8.5L12.5 6.5V15.5H1.5Z" fill="#e6e6e6" stroke="#f0f0f0"/><path d="M1.5 2.5H8.5L12.5 6.5V15.5H1.5Z" fill="none" stroke="#333" stroke-width="0.6" transform="translate(0.8 0.8) scale(0.9)"/><path d="M8.5 2.5V6.5H12.5" stroke="#555" fill="none"/></svg>
<div class="t" style="left:199px;top:279px;color:#fff;letter-spacing:-0.067px">Form1.resx</div>
<div class="t" style="left:439px;top:279px;color:#fff;letter-spacing:-0.503px">09.12.2019 11:31</div>
<div class="t" style="left:583px;top:279px;color:#fff">Microsoft .NET M...</div>
<div class="t" style="left:700px;top:279px;width:69px;text-align:right;color:#fff;letter-spacing:-0.168px">7 КБ</div>
<svg style="left:179px;top:298px" width="16" height="16" viewBox="0 0 16 16"><defs><linearGradient id="ng" x1="0" x2="1"><stop offset="0" stop-color="#5a9cb0"/><stop offset="0.45" stop-color="#b0d8e4"/><stop offset="1" stop-color="#8cc0d0"/></linearGradient></defs><path d="M6 3H15.5V15.5H6Z" fill="#f4eedc"/><path d="M4.5 2.5H14.5V14.5H0.5Z" fill="url(#ng)"/><path d="M4.2 5.5H14M3.7 8H14M3.2 10.5H14M2.7 13H14" stroke="#e4f4f8" stroke-width="0.7"/><path d="M4.5 2.5H14.5" stroke="#f8f8f8" stroke-width="1.6"/><path d="M5.5 1V2.2M7.5 1V2.2M9.5 1V2.2M11.5 1V2.2M13.5 1V2.2" stroke="#e8e8e8" stroke-width="1"/></svg>
<div class="t" style="left:199px;top:300px;color:#fff">Program</div>
<div class="t" style="left:439px;top:300px;color:#fff;letter-spacing:-0.503px">05.12.2019 16:27</div>
<div class="t" style="left:583px;top:300px;color:#fff;letter-spacing:-0.337px">Файл "CS"</div>
<div class="t" style="left:700px;top:300px;width:69px;text-align:right;color:#fff;letter-spacing:-0.168px">1 КБ</div>
<svg style="left:179px;top:319px" width="16" height="16" viewBox="0 0 16 16"><defs><linearGradient id="ng" x1="0" x2="1"><stop offset="0" stop-color="#5a9cb0"/><stop offset="0.45" stop-color="#b0d8e4"/><stop offset="1" stop-color="#8cc0d0"/></linearGradient></defs><path d="M6 3H15.5V15.5H6Z" fill="#f4eedc"/><path d="M4.5 2.5H14.5V14.5H0.5Z" fill="url(#ng)"/><path d="M4.2 5.5H14M3.7 8H14M3.2 10.5H14M2.7 13H14" stroke="#e4f4f8" stroke-width="0.7"/><path d="M4.5 2.5H14.5" stroke="#f8f8f8" stroke-width="1.6"/><path d="M5.5 1V2.2M7.5 1V2.2M9.5 1V2.2M11.5 1V2.2M13.5 1V2.2" stroke="#e8e8e8" stroke-width="1"/></svg>
<div class="t" style="left:199px;top:321px;color:#fff;letter-spacing:-0.203px">RoundPicrureBox</div>
<div class="t" style="left:439px;top:321px;color:#fff;letter-spacing:-0.503px">05.12.2019 20:06</div>
<div class="t" style="left:583px;top:321px;color:#fff;letter-spacing:-0.337px">Файл "CS"</div>
<div class="t" style="left:700px;top:321px;width:69px;text-align:right;color:#fff;letter-spacing:-0.168px">1 КБ</div>
<div class="a" style="left:0;top:436px;width:816px;height:24px;background:#333333"></div>
<div class="t" style="left:15px;top:441px;color:#c8c8c8;letter-spacing:-0.103px">Элементов: 10</div>
<div class="a" style="left:103px;top:441px;width:1px;height:14px;background:#ccc"></div>
<div class="a" style="left:767px;top:436px;width:22px;height:23px;background:#646464;border:1px solid #7c7c7c"></div>
<svg style="left:771px;top:441px" width="14" height="14" viewBox="0 0 14 14"><rect x="0" y="0" width="5" height="14" fill="#eee"/><circle cx="2.5" cy="2.5" r="0.9" fill="#3a7a50"/><circle cx="2.5" cy="6.5" r="0.9" fill="#4a90f0"/><circle cx="2.5" cy="10.5" r="0.9" fill="#e02020"/><path d="M6 2.5H8.5M10 2.5H13M6 6.5H8.5M10 6.5H13M6 10.5H8.5M10 10.5H13" stroke="#8a8a8a" stroke-width="1"/></svg>
<svg style="left:793px;top:441px" width="14" height="11" viewBox="0 0 14 11"><rect x="0" y="0" width="14" height="11" fill="#f4f4f4"/><rect x="2" y="2" width="10" height="7" fill="#4a90e8"/><path d="M2 5Q6 4 8 6T12 7V9H2Z" fill="#3a6a40"/><path d="M2 7.5H12V9H2Z" fill="#2a5a9a"/></svg>
<div class="a" style="left:0;top:0;width:816px;height:460px;border:1px solid #4a4a4a;border-top-color:#2a2a2a"></div>
</div>
</body></html>
